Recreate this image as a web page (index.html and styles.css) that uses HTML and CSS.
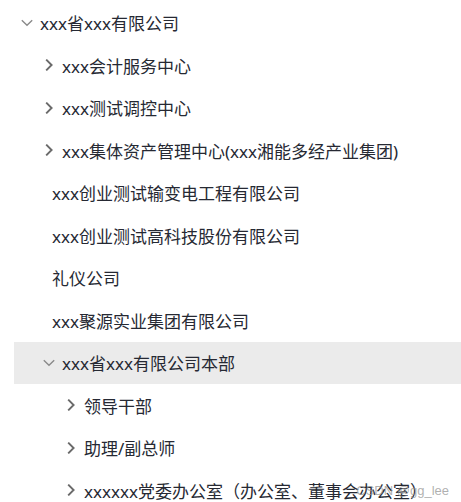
FILE: index.html
```html
<!DOCTYPE html>
<html lang="zh-CN">
<head>
<meta charset="utf-8">
<title>Tree</title>
<link rel="stylesheet" href="styles.css">
</head>
<body>
<div class="tree">
  <div class="node lv1">
    <span class="icon"><svg width="12" height="12" viewBox="0 0 12 12"><polyline class="down" points="0.8,3.2 6,8.2 11.2,3.2"/></svg></span>
    <span class="label">xxx省xxx有限公司</span>
  </div>
  <div class="node lv2">
    <span class="icon"><svg width="12" height="12" viewBox="0 0 12 12"><polyline class="right" points="3.2,0.6 8.6,6 3.2,11.4"/></svg></span>
    <span class="label">xxx会计服务中心</span>
  </div>
  <div class="node lv2">
    <span class="icon"><svg width="12" height="12" viewBox="0 0 12 12"><polyline class="right" points="3.2,0.6 8.6,6 3.2,11.4"/></svg></span>
    <span class="label">xxx测试调控中心</span>
  </div>
  <div class="node lv2">
    <span class="icon"><svg width="12" height="12" viewBox="0 0 12 12"><polyline class="right" points="3.2,0.6 8.6,6 3.2,11.4"/></svg></span>
    <span class="label">xxx集体资产管理中心(xxx湘能多经产业集团)</span>
  </div>
  <div class="node lv2 leaf"><span class="label">xxx创业测试输变电工程有限公司</span></div>
  <div class="node lv2 leaf"><span class="label">xxx创业测试高科技股份有限公司</span></div>
  <div class="node lv2 leaf"><span class="label">礼仪公司</span></div>
  <div class="node lv2 leaf"><span class="label">xxx聚源实业集团有限公司</span></div>
  <div class="node lv2 current">
    <span class="icon"><svg width="12" height="12" viewBox="0 0 12 12"><polyline class="down" points="0.8,3.2 6,8.2 11.2,3.2"/></svg></span>
    <span class="label">xxx省xxx有限公司本部</span>
  </div>
  <div class="node lv3">
    <span class="icon"><svg width="12" height="12" viewBox="0 0 12 12"><polyline class="right" points="3.2,0.6 8.6,6 3.2,11.4"/></svg></span>
    <span class="label">领导干部</span>
  </div>
  <div class="node lv3">
    <span class="icon"><svg width="12" height="12" viewBox="0 0 12 12"><polyline class="right" points="3.2,0.6 8.6,6 3.2,11.4"/></svg></span>
    <span class="label">助理/副总师</span>
  </div>
  <div class="node lv3">
    <span class="icon"><svg width="12" height="12" viewBox="0 0 12 12"><polyline class="right" points="3.2,0.6 8.6,6 3.2,11.4"/></svg></span>
    <span class="label">xxxxxx党委办公室（办公室、董事会办公室）</span>
  </div>
</div>
<div class="watermark">CSDN @gg_lee</div>
</body>
</html>
```
FILE: styles.css
```css
html, body {
  margin: 0;
  padding: 0;
  background: #ffffff;
}
body {
  width: 461px;
  height: 502px;
  overflow: hidden;
  position: relative;
  font-family: "Noto Sans", "Noto Sans CJK SC", sans-serif;
  font-size: 17px;
  color: #262933;
}
.tree {
  margin-left: 14px;
  padding-top: 1.5px;
}
.node {
  display: flex;
  align-items: center;
  height: 42.5px;
  white-space: nowrap;
}
.lv1 { padding-left: 0; }
.lv2 { padding-left: 22px; }
.lv3 { padding-left: 44px; }
.leaf { padding-left: 38px; }
.current { background: #ebebeb; }
.icon {
  width: 26px;
  height: 12px;
  display: flex;
  justify-content: center;
  align-items: center;
  flex: none;
}
.icon svg { display: block; }
.down {
  fill: none;
  stroke: #8a8a8a;
  stroke-width: 1.4;
}
.right {
  fill: none;
  stroke: #6a6a6a;
  stroke-width: 1.9;
}
.label {
  line-height: 1;
  position: relative;
  top: 1px;
}
.watermark {
  position: absolute;
  right: 12px;
  bottom: 4px;
  font-family: "Liberation Sans", Arial, sans-serif;
  font-size: 13px;
  color: rgba(150, 150, 150, 0.75);
}
```
